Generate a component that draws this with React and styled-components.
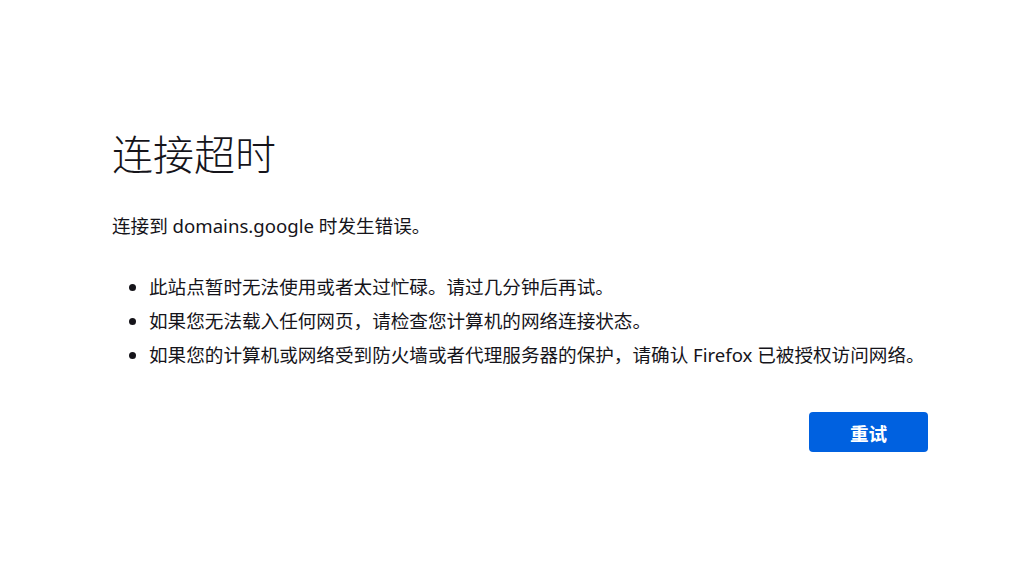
import React from 'react';
import styled, { createGlobalStyle } from 'styled-components';

const GlobalStyle = createGlobalStyle`
  html, body {
    margin: 0;
    padding: 0;
    background: #ffffff;
  }
  body {
    font-family: "Noto Sans", "Noto Sans CJK SC", sans-serif;
    color: #15141a;
  }
`;

const Page = styled.div`
  width: 1026px;
  height: 583px;
  box-sizing: border-box;
  padding: 128px 0 0 112px;
`;

const Container = styled.div`
  width: 816px;
`;

const Title = styled.h1`
  margin: 0;
  font-size: 41px;
  line-height: 48px;
  font-weight: 300;
  font-family: "Noto Sans CJK SC", sans-serif;
`;

const Message = styled.p`
  margin: 36px 0 0;
  font-size: 18.6px;
  line-height: 27px;
`;

const List = styled.ul`
  margin: 31px 0 0;
  padding-left: 37px;
  list-style: disc;
`;

const Item = styled.li`
  font-size: 18.6px;
  line-height: 34px;
  white-space: nowrap;
`;

const Actions = styled.div`
  display: flex;
  justify-content: flex-end;
  margin-top: 40px;
`;

const RetryButton = styled.button`
  width: 119px;
  height: 40px;
  border: none;
  border-radius: 4px;
  background: #0061e0;
  color: #ffffff;
  font-family: "Noto Sans CJK SC", sans-serif;
  font-size: 18.6px;
  font-weight: 700;
  cursor: pointer;
`;

const tips = [
  '此站点暂时无法使用或者太过忙碌。请过几分钟后再试。',
  '如果您无法载入任何网页，请检查您计算机的网络连接状态。',
  '如果您的计算机或网络受到防火墙或者代理服务器的保护，请确认 Firefox 已被授权访问网络。',
];

export default function App() {
  return (
    <>
      <GlobalStyle />
      <Page>
        <Container>
          <Title>连接超时</Title>
          <Message>连接到 domains.google 时发生错误。</Message>
          <List>
            {tips.map((t) => (
              <Item key={t}>{t}</Item>
            ))}
          </List>
          <Actions>
            <RetryButton>重试</RetryButton>
          </Actions>
        </Container>
      </Page>
    </>
  );
}
